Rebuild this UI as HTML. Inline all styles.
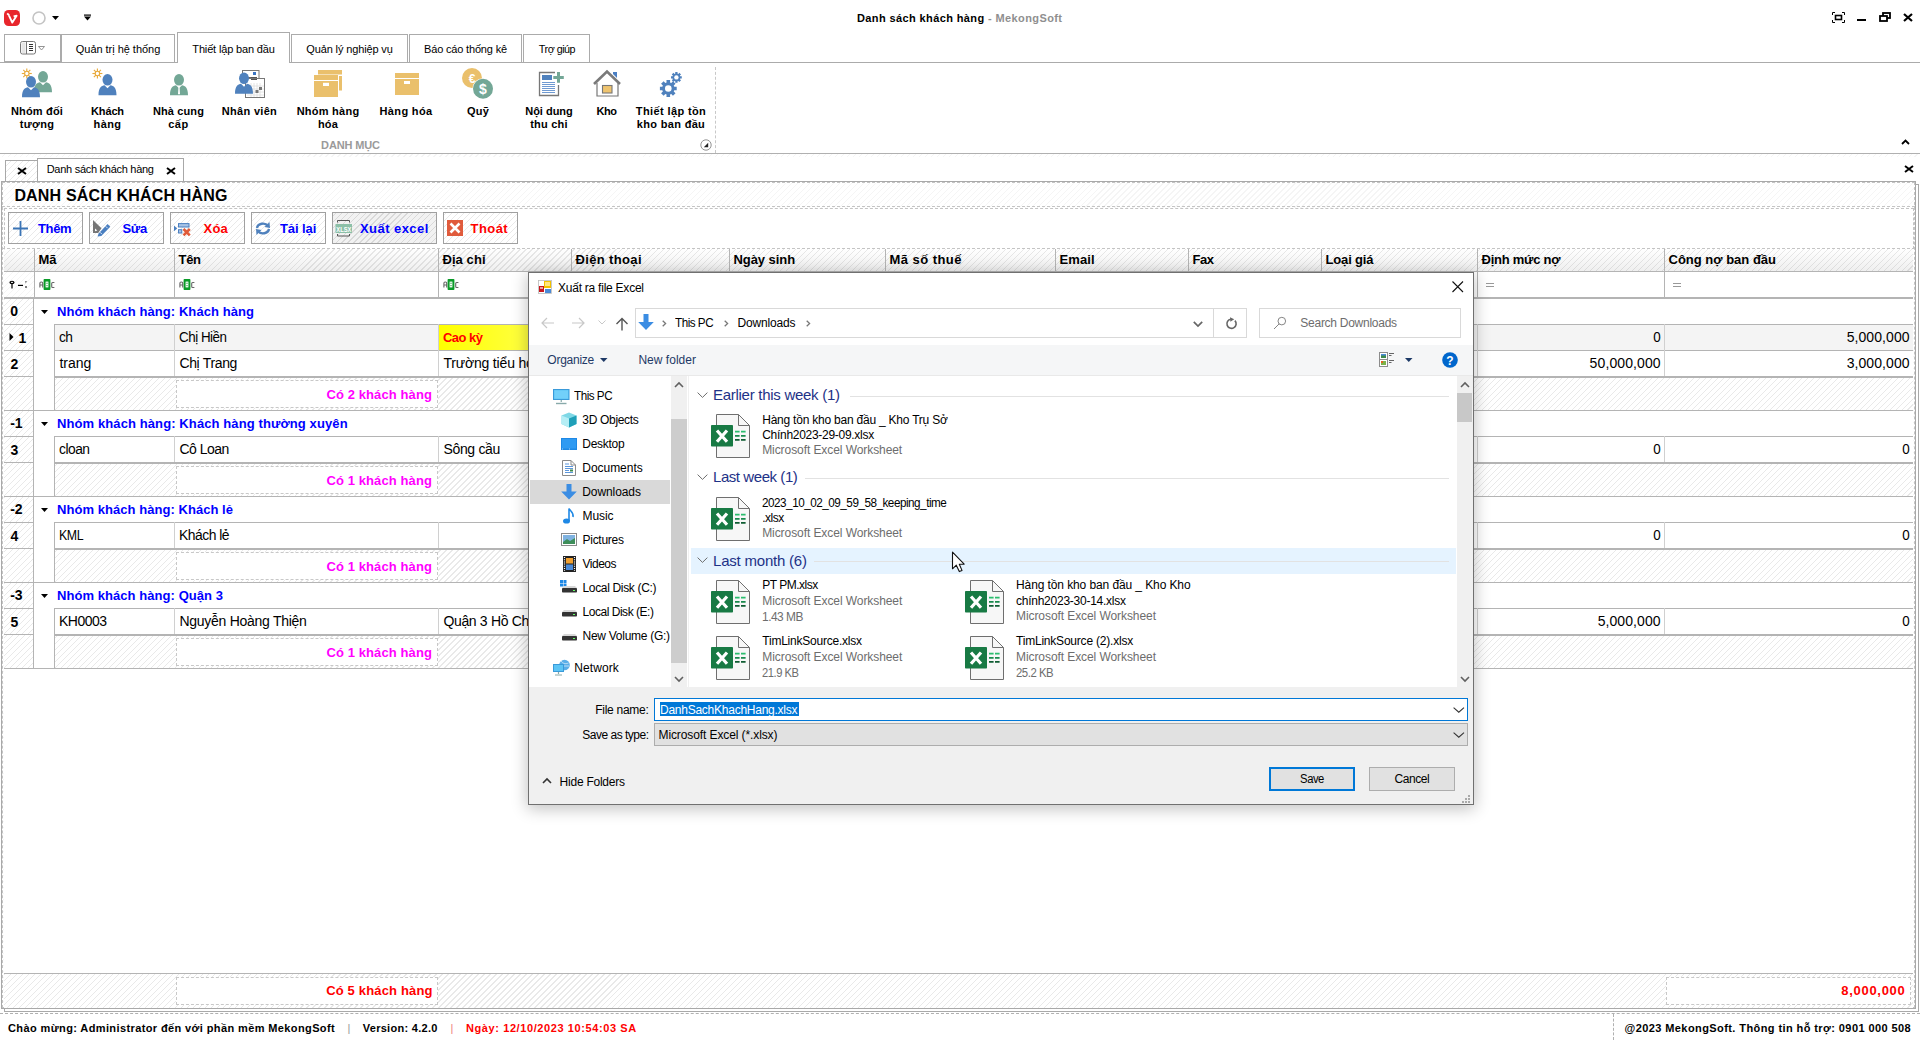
<!DOCTYPE html>
<html><head><meta charset="utf-8"><title>Danh sách khách hàng - MekongSoft</title>
<style>
html,body{margin:0;padding:0;width:1920px;height:1040px;overflow:hidden;background:#fff;}
body{position:relative;font-family:"Liberation Sans", sans-serif;}
.t{position:absolute;white-space:nowrap;}
.b{position:absolute;box-sizing:border-box;}
svg.b{overflow:visible;}
</style></head><body>
<svg class="b" style="left:4px;top:10px;" width="16" height="16" viewBox="0 0 16 16"><rect x="0" y="0" width="16" height="16" rx="4.5" fill="#e8262c"/><path d="M3.2 3.4 L5.2 5.4 M5 5.6 L8.3 12.6 L12.6 5.8 L9.6 6.4" stroke="#fff" stroke-width="1.9" fill="none" stroke-linejoin="round"/></svg><svg class="b" style="left:32px;top:11px;" width="14" height="14" viewBox="0 0 14 14"><circle cx="7" cy="7" r="6" stroke="#c4c4c4" stroke-width="1.6" fill="none"/></svg><svg class="b" style="left:52px;top:16px;" width="8" height="5" viewBox="0 0 8 5"><path d="M0 0 L7 0 L3.5 4 Z" fill="#000"/></svg><svg class="b" style="left:84px;top:14px;" width="8" height="8" viewBox="0 0 8 8"><rect x="0" y="0.5" width="7" height="1.2" fill="#000"/><path d="M0 2.5 L7 2.5 L3.5 6.5 Z" fill="#000"/></svg><div class="t" style="left:857px;top:13.19px;font-size:11px;line-height:11px;font-weight:700;color:#000;letter-spacing:0.389px;">Danh sách khách hàng <span style="color:#8f8f8f">- MekongSoft</span></div><svg class="b" style="left:1832px;top:12px;" width="13" height="11" viewBox="0 0 13 11"><path d="M0.5 3 V0.5 H3 M10 0.5 H12.5 V3 M12.5 8 V10.5 H10 M3 10.5 H0.5 V8" stroke="#000" stroke-width="1" fill="none"/><rect x="3.5" y="3.5" width="6" height="4" stroke="#000" stroke-width="1.6" fill="none"/></svg><div class="b" style="left:1857px;top:19px;width:9px;height:2px;background:#000"></div><svg class="b" style="left:1879px;top:12px;" width="12" height="10" viewBox="0 0 12 10"><rect x="4" y="1" width="7" height="5" stroke="#000" stroke-width="1.8" fill="none"/><rect x="1" y="4" width="7" height="5" stroke="#000" stroke-width="1.8" fill="#fff"/></svg><svg class="b" style="left:1903px;top:13px;" width="10" height="9" viewBox="0 0 10 9"><path d="M1 1 L9 8 M9 1 L1 8" stroke="#000" stroke-width="2.2"/></svg><div class="b" style="left:0px;top:62px;width:1920px;height:1px;background:#ababab"></div><div class="b" style="left:4px;top:34px;width:57px;height:28px;border:1px solid #ababab;background:#fff"></div><svg class="b" style="left:20px;top:41px;" width="26" height="14" viewBox="0 0 26 14"><rect x="0.5" y="0.5" width="15" height="12.5" rx="2" stroke="#777" fill="#fff"/><rect x="1.5" y="1.5" width="4" height="10.5" fill="#e6e6e6"/><path d="M6.5 0.5 V13" stroke="#777"/><path d="M9 3.5 H13 M9 5.5 H13 M9 7.5 H13 M9 9.5 H13" stroke="#333"/><path d="M18.5 5.5 L24.5 5.5 L21.5 9 Z" stroke="#888" fill="#fff" stroke-width="0.9"/></svg><div class="b" style="left:61px;top:34px;width:114px;height:28px;border:1px solid #ababab;border-bottom:none;background:#fff"></div><div class="t" style="left:-182.0px;width:600px;text-align:center;top:43.69px;font-size:11px;line-height:11px;font-weight:400;color:#000;letter-spacing:-0.032px;">Quản trị hệ thống</div><div class="b" style="left:291px;top:34px;width:117px;height:28px;border:1px solid #ababab;border-bottom:none;background:#fff"></div><div class="t" style="left:49.5px;width:600px;text-align:center;top:43.69px;font-size:11px;line-height:11px;font-weight:400;color:#000;letter-spacing:-0.136px;">Quản lý nghiệp vụ</div><div class="b" style="left:409px;top:34px;width:113px;height:28px;border:1px solid #ababab;border-bottom:none;background:#fff"></div><div class="t" style="left:165.5px;width:600px;text-align:center;top:43.69px;font-size:11px;line-height:11px;font-weight:400;color:#000;letter-spacing:-0.175px;">Báo cáo thống kê</div><div class="b" style="left:523px;top:34px;width:67px;height:28px;border:1px solid #ababab;border-bottom:none;background:#fff"></div><div class="t" style="left:256.5px;width:600px;text-align:center;top:43.69px;font-size:11px;line-height:11px;font-weight:400;color:#000;letter-spacing:-0.500px;transform:scaleX(0.9788);transform-origin:center center;">Trợ giúp</div><div class="b" style="left:177px;top:32px;width:113px;height:31px;border:1px solid #ababab;border-bottom:none;background:#fff"></div><div class="t" style="left:-66.5px;width:600px;text-align:center;top:43.69px;font-size:11px;line-height:11px;font-weight:400;color:#000;letter-spacing:-0.157px;">Thiết lập ban đầu</div><svg class="b" style="left:20px;top:64px;" width="34" height="36" viewBox="0 0 34 36"><g stroke="#e8a93a" stroke-width="1.1"><line x1="9.00" y1="9.50" x2="11.80" y2="9.50"/><line x1="8.36" y1="11.06" x2="10.34" y2="13.04"/><line x1="6.80" y1="11.70" x2="6.80" y2="14.50"/><line x1="5.24" y1="11.06" x2="3.26" y2="13.04"/><line x1="4.60" y1="9.50" x2="1.80" y2="9.50"/><line x1="5.24" y1="7.94" x2="3.26" y2="5.96"/><line x1="6.80" y1="7.30" x2="6.80" y2="4.50"/><line x1="8.36" y1="7.94" x2="10.34" y2="5.96"/></g><circle cx="6.8" cy="9.5" r="2.2" fill="none" stroke="#e8a93a" stroke-width="1.1"/><g transform="translate(23,7.3) scale(1.0)"><ellipse cx="0" cy="5.5" rx="5" ry="5.8" fill="#73a796"/><path d="M-9 21 C-9 13 -6 11.5 -3 11 L0 14 L3 11 C6 11.5 9 13 9 21 Z" fill="#73a796"/></g><g transform="translate(11,12.3) scale(1.0)"><ellipse cx="0" cy="5.5" rx="5" ry="5.8" fill="#4f81bd"/><path d="M-9 21 C-9 13 -6 11.5 -3 11 L0 14 L3 11 C6 11.5 9 13 9 21 Z" fill="#4f81bd"/></g></svg><svg class="b" style="left:90px;top:64px;" width="30" height="36" viewBox="0 0 30 36"><g stroke="#e8a93a" stroke-width="1.1"><line x1="9.60" y1="9.50" x2="12.40" y2="9.50"/><line x1="8.96" y1="11.06" x2="10.94" y2="13.04"/><line x1="7.40" y1="11.70" x2="7.40" y2="14.50"/><line x1="5.84" y1="11.06" x2="3.86" y2="13.04"/><line x1="5.20" y1="9.50" x2="2.40" y2="9.50"/><line x1="5.84" y1="7.94" x2="3.86" y2="5.96"/><line x1="7.40" y1="7.30" x2="7.40" y2="4.50"/><line x1="8.96" y1="7.94" x2="10.94" y2="5.96"/></g><circle cx="7.4" cy="9.5" r="2.2" fill="none" stroke="#e8a93a" stroke-width="1.1"/><g transform="translate(17.5,10.3) scale(1.0)"><ellipse cx="0" cy="5.5" rx="5" ry="5.8" fill="#4f81bd"/><path d="M-9 21 C-9 13 -6 11.5 -3 11 L0 14 L3 11 C6 11.5 9 13 9 21 Z" fill="#4f81bd"/></g></svg><svg class="b" style="left:168px;top:64px;" width="24" height="36" viewBox="0 0 24 36"><g transform="translate(11,10.3) scale(1.0)"><ellipse cx="0" cy="5.5" rx="5" ry="5.8" fill="#73a796"/><path d="M-9 21 C-9 13 -6 11.5 -3 11 L0 14 L3 11 C6 11.5 9 13 9 21 Z" fill="#73a796"/><path d="M-0.6 13 H0.6 L1 20 H-1 Z" fill="#fff"/></g></svg><svg class="b" style="left:234px;top:68px;" width="32" height="32" viewBox="0 0 32 32"><rect x="8.5" y="2.5" width="16.5" height="12" fill="#fff" stroke="#777" stroke-width="1"/><rect x="19" y="4" width="3" height="3" fill="#3a75c4"/><path d="M14 9.5 H21 M14 11.5 H21" stroke="#666"/><rect x="11.5" y="10.5" width="19" height="19" fill="#fff" stroke="#777"/><path d="M17 15 V29 M20 15 V29 M23 15 V29 M26 15 V29 M13 18 H30 M13 21 H30 M13 24 H30 M13 27 H30" stroke="#ddd" stroke-width="0.8"/><rect x="25" y="19" width="3" height="3" fill="#777"/><rect x="21.5" y="22" width="3" height="3" fill="#777"/><path d="M17 9.5 H23 M17 11.5 H23" stroke="#555"/><g transform="translate(10,4.8) scale(1.0)"><ellipse cx="0" cy="5.5" rx="5" ry="5.8" fill="#4f81bd"/><path d="M-9 21 C-9 13 -6 11.5 -3 11 L0 14 L3 11 C6 11.5 9 13 9 21 Z" fill="#4f81bd"/></g></svg><svg class="b" style="left:314px;top:70px;" width="29" height="28" viewBox="0 0 29 28"><rect x="4" y="0" width="24" height="4.5" fill="#eac06c"/><rect x="25" y="6" width="3" height="14.5" fill="#eac06c"/><rect x="0" y="5" width="24" height="5" fill="#eac06c"/><rect x="0" y="11" width="24" height="16" fill="#eac06c"/><rect x="9" y="12.8" width="6" height="3.2" fill="#fff"/></svg><svg class="b" style="left:395px;top:72px;" width="24" height="24" viewBox="0 0 24 24"><rect x="0" y="1" width="24" height="5" fill="#eac06c"/><rect x="0" y="7" width="24" height="16" fill="#eac06c"/><rect x="9" y="9" width="6" height="3" fill="#fff"/></svg><svg class="b" style="left:460px;top:66px;" width="36" height="34" viewBox="0 0 36 34"><circle cx="12" cy="12" r="10" fill="#eac06c"/><text x="12" y="16.5" font-size="12" font-weight="700" fill="#fff" text-anchor="middle" font-family="Liberation Sans">€</text><circle cx="23" cy="22.7" r="10.5" fill="#fff"/><circle cx="23" cy="22.7" r="10" fill="#73a796"/><text x="23" y="28" font-size="14" font-weight="700" fill="#fff" text-anchor="middle" font-family="Liberation Sans">$</text></svg><svg class="b" style="left:538px;top:70px;" width="28" height="28" viewBox="0 0 28 28"><path d="M17 2.5 H1.5 V25.5 H20.5 V15" stroke="#777" stroke-width="1.3" fill="#fff"/><rect x="4" y="5" width="10" height="5" fill="#4f81bd"/><path d="M4 12.5 H17 M4 14.5 H17 M4 16.5 H17 M4 18.5 H17 M4 20.5 H17 M4 22.5 H17" stroke="#6f9ad2" stroke-width="1"/><path d="M20.5 2 V12.8 M15.3 7.4 H25.8" stroke="#73a796" stroke-width="3"/></svg><svg class="b" style="left:592px;top:68px;" width="30" height="30" viewBox="0 0 30 30"><path d="M21 4 H25 V10 L21 6 Z" fill="#4a7ec2"/><path d="M5 15 V28 H26 V15" stroke="#777" stroke-width="1.2" fill="#fff"/><path d="M2 16 L15 3.5 L28 16" stroke="#7a7a7a" stroke-width="2.6" fill="none"/><rect x="10.5" y="17.5" width="9.5" height="7.5" fill="#efc46f" stroke="#777" stroke-width="1.1"/></svg><svg class="b" style="left:656px;top:68px;" width="32" height="32" viewBox="0 0 32 32"><polygon points="18.26,18.78 20.70,18.66 20.70,22.34 18.26,22.22 17.73,23.50 19.54,25.14 16.94,27.74 15.30,25.93 14.02,26.46 14.14,28.90 10.46,28.90 10.58,26.46 9.30,25.93 7.66,27.74 5.06,25.14 6.87,23.50 6.34,22.22 3.90,22.34 3.90,18.66 6.34,18.78 6.87,17.50 5.06,15.86 7.66,13.26 9.30,15.07 10.58,14.54 10.46,12.10 14.14,12.10 14.02,14.54 15.30,15.07 16.94,13.26 19.54,15.86 17.73,17.50" fill="#4f81bd"/><circle cx="12.3" cy="20.5" r="3.3" fill="#fff"/><polygon points="24.24,8.29 25.77,8.22 25.77,10.58 24.24,10.51 23.90,11.33 25.03,12.37 23.37,14.03 22.33,12.90 21.51,13.24 21.58,14.77 19.22,14.77 19.29,13.24 18.47,12.90 17.43,14.03 15.77,12.37 16.90,11.33 16.56,10.51 15.03,10.58 15.03,8.22 16.56,8.29 16.90,7.47 15.77,6.43 17.43,4.77 18.47,5.90 19.29,5.56 19.22,4.03 21.58,4.03 21.51,5.56 22.33,5.90 23.37,4.77 25.03,6.43 23.90,7.47" fill="#4f81bd"/><circle cx="20.4" cy="9.4" r="2.2" fill="#fff"/></svg><div class="t" style="left:-263px;width:600px;text-align:center;top:105.69px;font-size:11px;line-height:11px;font-weight:700;color:#000;letter-spacing:0.183px;">Nhóm đối</div><div class="t" style="left:-263px;width:600px;text-align:center;top:118.69px;font-size:11px;line-height:11px;font-weight:700;color:#000;letter-spacing:0.277px;">tượng</div><div class="t" style="left:-192.5px;width:600px;text-align:center;top:105.69px;font-size:11px;line-height:11px;font-weight:700;color:#000;letter-spacing:-0.156px;">Khách</div><div class="t" style="left:-192.5px;width:600px;text-align:center;top:118.69px;font-size:11px;line-height:11px;font-weight:700;color:#000;letter-spacing:0.406px;">hàng</div><div class="t" style="left:-121.5px;width:600px;text-align:center;top:105.69px;font-size:11px;line-height:11px;font-weight:700;color:#000;letter-spacing:0.125px;">Nhà cung</div><div class="t" style="left:-121.5px;width:600px;text-align:center;top:118.69px;font-size:11px;line-height:11px;font-weight:700;color:#000;letter-spacing:0.516px;">cấp</div><div class="t" style="left:-50.5px;width:600px;text-align:center;top:105.69px;font-size:11px;line-height:11px;font-weight:700;color:#000;letter-spacing:0.303px;">Nhân viên</div><div class="t" style="left:28px;width:600px;text-align:center;top:105.69px;font-size:11px;line-height:11px;font-weight:700;color:#000;letter-spacing:0.250px;">Nhóm hàng</div><div class="t" style="left:28px;width:600px;text-align:center;top:118.69px;font-size:11px;line-height:11px;font-weight:700;color:#000;letter-spacing:0.219px;">hóa</div><div class="t" style="left:106px;width:600px;text-align:center;top:105.69px;font-size:11px;line-height:11px;font-weight:700;color:#000;letter-spacing:0.339px;">Hàng hóa</div><div class="t" style="left:178px;width:600px;text-align:center;top:105.69px;font-size:11px;line-height:11px;font-weight:700;color:#000;letter-spacing:0.172px;">Quỹ</div><div class="t" style="left:249px;width:600px;text-align:center;top:105.69px;font-size:11px;line-height:11px;font-weight:700;color:#000;letter-spacing:-0.022px;">Nội dung</div><div class="t" style="left:249px;width:600px;text-align:center;top:118.69px;font-size:11px;line-height:11px;font-weight:700;color:#000;letter-spacing:0.240px;">thu chi</div><div class="t" style="left:306.5px;width:600px;text-align:center;top:105.69px;font-size:11px;line-height:11px;font-weight:700;color:#000;letter-spacing:-0.445px;">Kho</div><div class="t" style="left:371px;width:600px;text-align:center;top:105.69px;font-size:11px;line-height:11px;font-weight:700;color:#000;letter-spacing:0.384px;">Thiết lập tồn</div><div class="t" style="left:371px;width:600px;text-align:center;top:118.69px;font-size:11px;line-height:11px;font-weight:700;color:#000;letter-spacing:0.322px;">kho ban đầu</div><div class="t" style="left:50.5px;width:600px;text-align:center;top:139.89px;font-size:11px;line-height:11px;font-weight:700;color:#9a9a9a;letter-spacing:-0.127px;">DANH MỤC</div><div class="b" style="left:715px;top:67px;width:1px;height:86px;border-left:1px dashed #c8c8c8"></div><svg class="b" style="left:700px;top:139px;" width="12" height="12" viewBox="0 0 12 12"><circle cx="6" cy="6" r="5.2" fill="#fff" stroke="#888" stroke-width="0.9"/><path d="M3.8 8.2 H8.2 V3.8 Z" fill="#222"/></svg><svg class="b" style="left:1901px;top:139px;" width="9" height="6" viewBox="0 0 9 6"><path d="M1 5 L4.5 1.5 L8 5" stroke="#000" stroke-width="1.8" fill="none"/></svg><div class="b" style="left:0px;top:153px;width:1920px;height:1px;background:#b0b0b0"></div><div class="b" style="left:0px;top:154px;width:1920px;height:3px;background:repeating-linear-gradient(-45deg, #ffffff 0px, #ffffff 3.4px, #f5f5f5 3.4px, #f5f5f5 4.24px)"></div><div class="b" style="left:5px;top:160px;width:33px;height:22px;border:1px solid #a8a8a8;border-bottom:none;background:repeating-linear-gradient(-45deg, #ffffff 0px, #ffffff 3.4px, #e9e9e9 3.4px, #e9e9e9 4.24px)"></div><svg class="b" style="left:17px;top:167px;" width="10" height="8" viewBox="0 0 10 8"><path d="M1 1 L9 7 M9 1 L1 7" stroke="#000" stroke-width="2"/></svg><div class="b" style="left:37px;top:158px;width:147px;height:24px;border:1px solid #a8a8a8;border-bottom:none;background:#fff"></div><div class="t" style="left:46.7px;top:163.99px;font-size:11px;line-height:11px;font-weight:400;color:#000;letter-spacing:-0.275px;">Danh sách khách hàng</div><svg class="b" style="left:166px;top:167px;" width="10" height="8" viewBox="0 0 10 8"><path d="M1 1 L9 7 M9 1 L1 7" stroke="#000" stroke-width="2"/></svg><svg class="b" style="left:1904px;top:165px;" width="10" height="8" viewBox="0 0 10 8"><path d="M1 1 L9 7 M9 1 L1 7" stroke="#000" stroke-width="2"/></svg><div class="b" style="left:4px;top:184px;width:1915px;height:828px;border:1px solid #a9a9a9"></div><div class="b" style="left:1px;top:181px;width:1915px;height:828px;border:1px solid #a9a9a9;background:repeating-linear-gradient(-45deg, #ffffff 0px, #ffffff 3.4px, #f5f5f5 3.4px, #f5f5f5 4.24px)"></div><div class="b" style="left:2px;top:182px;width:1913px;height:826px;border:1px dashed #c4c4c4"></div><div class="t" style="left:14.4px;top:187.76px;font-size:16px;line-height:16px;font-weight:700;color:#000;letter-spacing:0.169px;">DANH SÁCH KHÁCH HÀNG</div><div class="b" style="left:2px;top:206px;width:1913px;height:1px;border-top:1px dashed #c4c4c4"></div><div class="b" style="left:4px;top:208px;width:1910px;height:41px;background:#fff;border-top:1px dashed #c4c4c4;border-left:1px dashed #c4c4c4;border-right:1px dashed #c4c4c4"></div><div class="b" style="left:8px;top:212px;width:75px;height:32px;border:1px solid #a0a0a0;background:repeating-linear-gradient(-45deg, #ffffff 0px, #ffffff 3.4px, #e9e9e9 3.4px, #e9e9e9 4.24px)"></div><div class="b" style="left:89px;top:212px;width:75px;height:32px;border:1px solid #a0a0a0;background:repeating-linear-gradient(-45deg, #ffffff 0px, #ffffff 3.4px, #e9e9e9 3.4px, #e9e9e9 4.24px)"></div><div class="b" style="left:170px;top:212px;width:75px;height:32px;border:1px solid #a0a0a0;background:repeating-linear-gradient(-45deg, #ffffff 0px, #ffffff 3.4px, #e9e9e9 3.4px, #e9e9e9 4.24px)"></div><div class="b" style="left:251px;top:212px;width:75px;height:32px;border:1px solid #a0a0a0;background:repeating-linear-gradient(-45deg, #ffffff 0px, #ffffff 3.4px, #e9e9e9 3.4px, #e9e9e9 4.24px)"></div><div class="b" style="left:332px;top:212px;width:105px;height:32px;border:1px solid #a0a0a0;background:repeating-linear-gradient(-45deg, #f2f2f2 0px, #f2f2f2 3.2px, #d9d9d9 3.2px, #d9d9d9 4.2px)"></div><div class="b" style="left:443px;top:212px;width:75px;height:32px;border:1px solid #a0a0a0;background:repeating-linear-gradient(-45deg, #ffffff 0px, #ffffff 3.4px, #e9e9e9 3.4px, #e9e9e9 4.24px)"></div><div class="t" style="left:38px;top:221.70px;font-size:13px;line-height:13px;font-weight:700;color:#0000ff;letter-spacing:-0.357px;">Thêm</div><div class="t" style="left:122.5px;top:221.70px;font-size:13px;line-height:13px;font-weight:700;color:#0000ff;letter-spacing:-0.314px;">Sửa</div><div class="t" style="left:203.5px;top:221.70px;font-size:13px;line-height:13px;font-weight:700;color:#ff0000;letter-spacing:0.228px;">Xóa</div><div class="t" style="left:280px;top:221.70px;font-size:13px;line-height:13px;font-weight:700;color:#0000ff;letter-spacing:-0.093px;">Tải lại</div><div class="t" style="left:360px;top:221.70px;font-size:13px;line-height:13px;font-weight:700;color:#0000ff;letter-spacing:0.441px;">Xuất excel</div><div class="t" style="left:470.5px;top:221.70px;font-size:13px;line-height:13px;font-weight:700;color:#ff0000;letter-spacing:0.452px;">Thoát</div><svg class="b" style="left:13px;top:221px;" width="15" height="15" viewBox="0 0 15 15"><path d="M7.5 0 V15 M0 7.5 H15" stroke="#3b74b5" stroke-width="1.8"/></svg><svg class="b" style="left:90px;top:218px;" width="22" height="20" viewBox="0 0 22 20"><path d="M3 2 L11.5 10.3 L8.2 15 H3 Z" fill="#767676"/><path d="M5 10.5 L7.3 12.6 L5 13.3 Z" fill="#fff"/><path d="M8.6 15.4 L17.6 6.1 L20.3 8.8 L11.3 18 L7.5 18.4 Z" fill="#4a7fc0"/><path d="M10.1 14.3 L11.9 16.1 M15.8 8.4 L17.6 10.2" stroke="#fff" stroke-width="0.8"/></svg><svg class="b" style="left:172px;top:221px;" width="20" height="17" viewBox="0 0 20 17"><path d="M2 4.6 L5.2 7.4 L2 10.2 Z" fill="#4a7fc0"/><rect x="6.5" y="2.6" width="10.5" height="3.4" fill="#a8c4e6" stroke="#4a7fc0" stroke-width="1"/><rect x="6.5" y="8.7" width="3.3" height="3.3" fill="#a8c4e6" stroke="#4a7fc0" stroke-width="1"/><path d="M11.5 8 L17.8 14.3 M17.8 8 L11.5 14.3" stroke="#e05a38" stroke-width="2.6"/></svg><svg class="b" style="left:255px;top:222px;" width="16" height="13" viewBox="0 0 16 13"><path d="M2 6 A6 5 0 0 1 13 4" stroke="#4f81bd" stroke-width="2.4" fill="none"/><path d="M14.5 0 L15 6 L9.5 5 Z" fill="#4f81bd"/><path d="M14 7 A6 5 0 0 1 3 9" stroke="#4f81bd" stroke-width="2.4" fill="none"/><path d="M1.5 13 L1 7 L6.5 8 Z" fill="#4f81bd"/></svg><svg class="b" style="left:335px;top:220px;" width="18" height="17" viewBox="0 0 18 17"><path d="M2.5 2.5 V0.5 H14.5 V2.5 M2.5 14 V16 H14.5 V14" stroke="#555" fill="none"/><rect x="0.5" y="4" width="16.5" height="9" fill="#8cc0a8"/><text x="8.8" y="11.5" font-size="7" fill="#fff" text-anchor="middle" font-family="Liberation Sans" font-weight="700" textLength="15" lengthAdjust="spacingAndGlyphs">XLSX</text></svg><svg class="b" style="left:447px;top:220px;" width="16" height="16" viewBox="0 0 16 16"><rect x="0" y="0" width="16" height="16" fill="#e05b3c"/><path d="M3.5 3.5 L12.5 12.5 M12.5 3.5 L3.5 12.5" stroke="#fff" stroke-width="2.6"/></svg><div class="b" style="left:4px;top:249px;width:1909px;height:22px;background:repeating-linear-gradient(-45deg, rgba(0,0,0,0) 0px, rgba(0,0,0,0) 3.4px, rgba(0,0,0,0.085) 3.4px, rgba(0,0,0,0.085) 4.24px), linear-gradient(#ffffff, #efefef)"></div><div class="b" style="left:2px;top:248px;width:1913px;height:1px;border-top:1px dashed #c4c4c4"></div><div class="b" style="left:34px;top:249px;width:1px;height:23px;background:#b4b4b4"></div><div class="t" style="left:38.5px;top:252.80px;font-size:13px;line-height:13px;font-weight:700;color:#000;letter-spacing:-0.062px;">Mã</div><div class="b" style="left:174px;top:249px;width:1px;height:23px;background:#b4b4b4"></div><div class="t" style="left:178.5px;top:252.80px;font-size:13px;line-height:13px;font-weight:700;color:#000;letter-spacing:-0.312px;">Tên</div><div class="b" style="left:438px;top:249px;width:1px;height:23px;background:#b4b4b4"></div><div class="t" style="left:442.5px;top:252.80px;font-size:13px;line-height:13px;font-weight:700;color:#000;letter-spacing:0.062px;">Địa chỉ</div><div class="b" style="left:571px;top:249px;width:1px;height:23px;background:#b4b4b4"></div><div class="t" style="left:575.5px;top:252.80px;font-size:13px;line-height:13px;font-weight:700;color:#000;letter-spacing:0.351px;">Điện thoại</div><div class="b" style="left:729px;top:249px;width:1px;height:23px;background:#b4b4b4"></div><div class="t" style="left:733.5px;top:252.80px;font-size:13px;line-height:13px;font-weight:700;color:#000;letter-spacing:-0.066px;">Ngày sinh</div><div class="b" style="left:885px;top:249px;width:1px;height:23px;background:#b4b4b4"></div><div class="t" style="left:889.5px;top:252.80px;font-size:13px;line-height:13px;font-weight:700;color:#000;letter-spacing:0.455px;">Mã số thuế</div><div class="b" style="left:1055px;top:249px;width:1px;height:23px;background:#b4b4b4"></div><div class="t" style="left:1059.5px;top:252.80px;font-size:13px;line-height:13px;font-weight:700;color:#000;letter-spacing:0.078px;">Email</div><div class="b" style="left:1188px;top:249px;width:1px;height:23px;background:#b4b4b4"></div><div class="t" style="left:1192.5px;top:252.80px;font-size:13px;line-height:13px;font-weight:700;color:#000;letter-spacing:-0.403px;">Fax</div><div class="b" style="left:1321px;top:249px;width:1px;height:23px;background:#b4b4b4"></div><div class="t" style="left:1325.5px;top:252.80px;font-size:13px;line-height:13px;font-weight:700;color:#000;letter-spacing:-0.161px;">Loại giá</div><div class="b" style="left:1477px;top:249px;width:1px;height:23px;background:#b4b4b4"></div><div class="t" style="left:1481.5px;top:252.80px;font-size:13px;line-height:13px;font-weight:700;color:#000;letter-spacing:-0.250px;">Định mức nợ</div><div class="b" style="left:1664px;top:249px;width:1px;height:23px;background:#b4b4b4"></div><div class="t" style="left:1668.5px;top:252.80px;font-size:13px;line-height:13px;font-weight:700;color:#000;letter-spacing:0.003px;">Công nợ ban đầu</div><div class="b" style="left:4px;top:271px;width:1909px;height:1px;background:#b4b4b4"></div><div class="b" style="left:34px;top:272px;width:1879px;height:25px;background:#fff"></div><div class="b" style="left:4px;top:297px;width:1909px;height:2px;background:#b4b4b4"></div><div class="b" style="left:34px;top:272px;width:1px;height:25px;background:#b4b4b4"></div><div class="b" style="left:174px;top:272px;width:1px;height:25px;background:#b4b4b4"></div><div class="b" style="left:438px;top:272px;width:1px;height:25px;background:#b4b4b4"></div><div class="b" style="left:571px;top:272px;width:1px;height:25px;background:#b4b4b4"></div><div class="b" style="left:729px;top:272px;width:1px;height:25px;background:#b4b4b4"></div><div class="b" style="left:885px;top:272px;width:1px;height:25px;background:#b4b4b4"></div><div class="b" style="left:1055px;top:272px;width:1px;height:25px;background:#b4b4b4"></div><div class="b" style="left:1188px;top:272px;width:1px;height:25px;background:#b4b4b4"></div><div class="b" style="left:1321px;top:272px;width:1px;height:25px;background:#b4b4b4"></div><div class="b" style="left:1477px;top:272px;width:1px;height:25px;background:#b4b4b4"></div><div class="b" style="left:1664px;top:272px;width:1px;height:25px;background:#b4b4b4"></div><svg class="b" style="left:38.5px;top:279px;" width="16" height="11" viewBox="0 0 16 11"><path d="M0.9 8.5 V4.3 Q0.9 3 2.1 3 H2.5 Q3.7 3 3.7 4.3 V8.5 M0.9 6 H3.7" stroke="#666" stroke-width="1.1" fill="none"/><rect x="4.6" y="0" width="6.8" height="11" rx="0.8" fill="#0a9b28"/><rect x="6.6" y="2.6" width="2.8" height="5.8" fill="#fff"/><rect x="7.5" y="3.7" width="1" height="1.2" fill="#0a9b28"/><rect x="7.5" y="6" width="1" height="1.2" fill="#0a9b28"/><path d="M15.4 3.5 H13.6 Q12.7 3.5 12.7 4.5 V7.5 Q12.7 8.5 13.6 8.5 H15.4" stroke="#666" stroke-width="1.1" fill="none"/></svg><svg class="b" style="left:178.5px;top:279px;" width="16" height="11" viewBox="0 0 16 11"><path d="M0.9 8.5 V4.3 Q0.9 3 2.1 3 H2.5 Q3.7 3 3.7 4.3 V8.5 M0.9 6 H3.7" stroke="#666" stroke-width="1.1" fill="none"/><rect x="4.6" y="0" width="6.8" height="11" rx="0.8" fill="#0a9b28"/><rect x="6.6" y="2.6" width="2.8" height="5.8" fill="#fff"/><rect x="7.5" y="3.7" width="1" height="1.2" fill="#0a9b28"/><rect x="7.5" y="6" width="1" height="1.2" fill="#0a9b28"/><path d="M15.4 3.5 H13.6 Q12.7 3.5 12.7 4.5 V7.5 Q12.7 8.5 13.6 8.5 H15.4" stroke="#666" stroke-width="1.1" fill="none"/></svg><svg class="b" style="left:442.5px;top:279px;" width="16" height="11" viewBox="0 0 16 11"><path d="M0.9 8.5 V4.3 Q0.9 3 2.1 3 H2.5 Q3.7 3 3.7 4.3 V8.5 M0.9 6 H3.7" stroke="#666" stroke-width="1.1" fill="none"/><rect x="4.6" y="0" width="6.8" height="11" rx="0.8" fill="#0a9b28"/><rect x="6.6" y="2.6" width="2.8" height="5.8" fill="#fff"/><rect x="7.5" y="3.7" width="1" height="1.2" fill="#0a9b28"/><rect x="7.5" y="6" width="1" height="1.2" fill="#0a9b28"/><path d="M15.4 3.5 H13.6 Q12.7 3.5 12.7 4.5 V7.5 Q12.7 8.5 13.6 8.5 H15.4" stroke="#666" stroke-width="1.1" fill="none"/></svg><svg class="b" style="left:575.5px;top:279px;" width="16" height="11" viewBox="0 0 16 11"><path d="M0.9 8.5 V4.3 Q0.9 3 2.1 3 H2.5 Q3.7 3 3.7 4.3 V8.5 M0.9 6 H3.7" stroke="#666" stroke-width="1.1" fill="none"/><rect x="4.6" y="0" width="6.8" height="11" rx="0.8" fill="#0a9b28"/><rect x="6.6" y="2.6" width="2.8" height="5.8" fill="#fff"/><rect x="7.5" y="3.7" width="1" height="1.2" fill="#0a9b28"/><rect x="7.5" y="6" width="1" height="1.2" fill="#0a9b28"/><path d="M15.4 3.5 H13.6 Q12.7 3.5 12.7 4.5 V7.5 Q12.7 8.5 13.6 8.5 H15.4" stroke="#666" stroke-width="1.1" fill="none"/></svg><svg class="b" style="left:733.5px;top:279px;" width="16" height="11" viewBox="0 0 16 11"><path d="M0.9 8.5 V4.3 Q0.9 3 2.1 3 H2.5 Q3.7 3 3.7 4.3 V8.5 M0.9 6 H3.7" stroke="#666" stroke-width="1.1" fill="none"/><rect x="4.6" y="0" width="6.8" height="11" rx="0.8" fill="#0a9b28"/><rect x="6.6" y="2.6" width="2.8" height="5.8" fill="#fff"/><rect x="7.5" y="3.7" width="1" height="1.2" fill="#0a9b28"/><rect x="7.5" y="6" width="1" height="1.2" fill="#0a9b28"/><path d="M15.4 3.5 H13.6 Q12.7 3.5 12.7 4.5 V7.5 Q12.7 8.5 13.6 8.5 H15.4" stroke="#666" stroke-width="1.1" fill="none"/></svg><svg class="b" style="left:889.5px;top:279px;" width="16" height="11" viewBox="0 0 16 11"><path d="M0.9 8.5 V4.3 Q0.9 3 2.1 3 H2.5 Q3.7 3 3.7 4.3 V8.5 M0.9 6 H3.7" stroke="#666" stroke-width="1.1" fill="none"/><rect x="4.6" y="0" width="6.8" height="11" rx="0.8" fill="#0a9b28"/><rect x="6.6" y="2.6" width="2.8" height="5.8" fill="#fff"/><rect x="7.5" y="3.7" width="1" height="1.2" fill="#0a9b28"/><rect x="7.5" y="6" width="1" height="1.2" fill="#0a9b28"/><path d="M15.4 3.5 H13.6 Q12.7 3.5 12.7 4.5 V7.5 Q12.7 8.5 13.6 8.5 H15.4" stroke="#666" stroke-width="1.1" fill="none"/></svg><svg class="b" style="left:1059.5px;top:279px;" width="16" height="11" viewBox="0 0 16 11"><path d="M0.9 8.5 V4.3 Q0.9 3 2.1 3 H2.5 Q3.7 3 3.7 4.3 V8.5 M0.9 6 H3.7" stroke="#666" stroke-width="1.1" fill="none"/><rect x="4.6" y="0" width="6.8" height="11" rx="0.8" fill="#0a9b28"/><rect x="6.6" y="2.6" width="2.8" height="5.8" fill="#fff"/><rect x="7.5" y="3.7" width="1" height="1.2" fill="#0a9b28"/><rect x="7.5" y="6" width="1" height="1.2" fill="#0a9b28"/><path d="M15.4 3.5 H13.6 Q12.7 3.5 12.7 4.5 V7.5 Q12.7 8.5 13.6 8.5 H15.4" stroke="#666" stroke-width="1.1" fill="none"/></svg><svg class="b" style="left:1192.5px;top:279px;" width="16" height="11" viewBox="0 0 16 11"><path d="M0.9 8.5 V4.3 Q0.9 3 2.1 3 H2.5 Q3.7 3 3.7 4.3 V8.5 M0.9 6 H3.7" stroke="#666" stroke-width="1.1" fill="none"/><rect x="4.6" y="0" width="6.8" height="11" rx="0.8" fill="#0a9b28"/><rect x="6.6" y="2.6" width="2.8" height="5.8" fill="#fff"/><rect x="7.5" y="3.7" width="1" height="1.2" fill="#0a9b28"/><rect x="7.5" y="6" width="1" height="1.2" fill="#0a9b28"/><path d="M15.4 3.5 H13.6 Q12.7 3.5 12.7 4.5 V7.5 Q12.7 8.5 13.6 8.5 H15.4" stroke="#666" stroke-width="1.1" fill="none"/></svg><svg class="b" style="left:1325.5px;top:279px;" width="16" height="11" viewBox="0 0 16 11"><path d="M0.9 8.5 V4.3 Q0.9 3 2.1 3 H2.5 Q3.7 3 3.7 4.3 V8.5 M0.9 6 H3.7" stroke="#666" stroke-width="1.1" fill="none"/><rect x="4.6" y="0" width="6.8" height="11" rx="0.8" fill="#0a9b28"/><rect x="6.6" y="2.6" width="2.8" height="5.8" fill="#fff"/><rect x="7.5" y="3.7" width="1" height="1.2" fill="#0a9b28"/><rect x="7.5" y="6" width="1" height="1.2" fill="#0a9b28"/><path d="M15.4 3.5 H13.6 Q12.7 3.5 12.7 4.5 V7.5 Q12.7 8.5 13.6 8.5 H15.4" stroke="#666" stroke-width="1.1" fill="none"/></svg><div class="b" style="left:1486px;top:283px;width:8px;height:1px;background:#999"></div><div class="b" style="left:1486px;top:286px;width:8px;height:1px;background:#999"></div><div class="b" style="left:1673px;top:283px;width:8px;height:1px;background:#999"></div><div class="b" style="left:1673px;top:286px;width:8px;height:1px;background:#999"></div><svg class="b" style="left:7px;top:280px;" width="22" height="12" viewBox="0 0 22 12"><ellipse cx="5" cy="2.5" rx="2.6" ry="1.8" fill="#000"/><ellipse cx="5" cy="2.3" rx="1.2" ry="0.6" fill="#fff"/><rect x="4.4" y="3.5" width="1.2" height="5" fill="#000"/><rect x="11" y="4.8" width="5" height="1.2" fill="#000"/><path d="M18.5 1 L19.5 1 L18.8 3.5 Z" fill="#000"/><path d="M18.5 6 L19.5 6 L19.5 8 L18.5 8 Z" fill="#000"/></svg><div class="b" style="left:34px;top:299px;width:1879px;height:670px;background:#fff"></div><div class="b" style="left:4px;top:668px;width:30px;height:305px;background:#fff"></div><div class="b" style="left:33px;top:298px;width:1px;height:371px;background:#b4b4b4"></div><div class="b" style="left:4px;top:299px;width:29px;height:25px;background:repeating-linear-gradient(-45deg, #ffffff 0px, #ffffff 3.4px, #e9e9e9 3.4px, #e9e9e9 4.24px)"></div><div class="t" style="left:10.2px;top:303.95px;font-size:14px;line-height:14px;font-weight:700;color:#000;">0</div><svg class="b" style="left:41px;top:310px;" width="8" height="5" viewBox="0 0 8 5"><path d="M0 0 H7 L3.5 4 Z" fill="#000"/></svg><div class="t" style="left:57px;top:304.80px;font-size:13px;line-height:13px;font-weight:700;color:#0000ff;letter-spacing:0.076px;">Nhóm khách hàng: Khách hàng</div><div class="b" style="left:4px;top:325px;width:29px;height:25px;background:repeating-linear-gradient(-45deg, #ffffff 0px, #ffffff 3.4px, #e9e9e9 3.4px, #e9e9e9 4.24px)"></div><div class="b" style="left:4px;top:324px;width:29px;height:1px;background:#b4b4b4"></div><div class="b" style="left:54px;top:324px;width:1859px;height:1px;background:#b4b4b4"></div><div class="b" style="left:54px;top:324px;width:1px;height:27px;background:#b4b4b4"></div><div class="b" style="left:55px;top:325px;width:1858px;height:25px;background:#f4f4f4"></div><div class="b" style="left:439px;top:325px;width:132px;height:25px;background:linear-gradient(90deg,#ffff00,#ffff60)"></div><svg class="b" style="left:9px;top:333px;" width="5" height="8" viewBox="0 0 5 8"><path d="M0.5 0 L4.5 4 L0.5 8 Z" fill="#000"/></svg><div class="t" style="left:18.5px;top:330.65px;font-size:14px;line-height:14px;font-weight:700;color:#000;">1</div><div class="b" style="left:174px;top:324px;width:1px;height:27px;background:#d0d0d0"></div><div class="b" style="left:438px;top:324px;width:1px;height:27px;background:#d0d0d0"></div><div class="b" style="left:571px;top:324px;width:1px;height:27px;background:#d0d0d0"></div><div class="b" style="left:729px;top:324px;width:1px;height:27px;background:#d0d0d0"></div><div class="b" style="left:885px;top:324px;width:1px;height:27px;background:#d0d0d0"></div><div class="b" style="left:1055px;top:324px;width:1px;height:27px;background:#d0d0d0"></div><div class="b" style="left:1188px;top:324px;width:1px;height:27px;background:#d0d0d0"></div><div class="b" style="left:1321px;top:324px;width:1px;height:27px;background:#d0d0d0"></div><div class="b" style="left:1477px;top:324px;width:1px;height:27px;background:#d0d0d0"></div><div class="b" style="left:1664px;top:324px;width:1px;height:27px;background:#d0d0d0"></div><div class="t" style="left:59.4px;top:330.15px;font-size:14px;line-height:14px;font-weight:400;color:#000;letter-spacing:-0.500px;transform:scaleX(0.9792);transform-origin:left center;">ch</div><div class="t" style="left:179.4px;top:330.15px;font-size:14px;line-height:14px;font-weight:400;color:#000;letter-spacing:-0.500px;transform:scaleX(0.9561);transform-origin:left center;">Chị Hiền</div><div class="t" style="left:443.3px;top:331.20px;font-size:13px;line-height:13px;font-weight:700;color:#ff0000;letter-spacing:-0.500px;transform:scaleX(0.9965);transform-origin:left center;">Cao kỳ</div><div class="t" style="right:259.29999999999995px;top:330.15px;font-size:14px;line-height:14px;font-weight:400;color:#000;letter-spacing:-0.500px;transform:scaleX(0.9593);transform-origin:right center;">0</div><div class="t" style="right:10.299999999999955px;top:330.15px;font-size:14px;line-height:14px;font-weight:400;color:#000;letter-spacing:0.088px;">5,000,000</div><div class="b" style="left:4px;top:351px;width:29px;height:25px;background:repeating-linear-gradient(-45deg, #ffffff 0px, #ffffff 3.4px, #e9e9e9 3.4px, #e9e9e9 4.24px)"></div><div class="b" style="left:4px;top:350px;width:29px;height:1px;background:#b4b4b4"></div><div class="b" style="left:54px;top:350px;width:1859px;height:1px;background:#b4b4b4"></div><div class="b" style="left:54px;top:350px;width:1px;height:27px;background:#b4b4b4"></div><div class="t" style="left:10.6px;top:356.65px;font-size:14px;line-height:14px;font-weight:700;color:#000;">2</div><div class="b" style="left:174px;top:350px;width:1px;height:27px;background:#d0d0d0"></div><div class="b" style="left:438px;top:350px;width:1px;height:27px;background:#d0d0d0"></div><div class="b" style="left:571px;top:350px;width:1px;height:27px;background:#d0d0d0"></div><div class="b" style="left:729px;top:350px;width:1px;height:27px;background:#d0d0d0"></div><div class="b" style="left:885px;top:350px;width:1px;height:27px;background:#d0d0d0"></div><div class="b" style="left:1055px;top:350px;width:1px;height:27px;background:#d0d0d0"></div><div class="b" style="left:1188px;top:350px;width:1px;height:27px;background:#d0d0d0"></div><div class="b" style="left:1321px;top:350px;width:1px;height:27px;background:#d0d0d0"></div><div class="b" style="left:1477px;top:350px;width:1px;height:27px;background:#d0d0d0"></div><div class="b" style="left:1664px;top:350px;width:1px;height:27px;background:#d0d0d0"></div><div class="t" style="left:59.4px;top:356.15px;font-size:14px;line-height:14px;font-weight:400;color:#000;letter-spacing:0.020px;">trang</div><div class="t" style="left:179.4px;top:356.15px;font-size:14px;line-height:14px;font-weight:400;color:#000;letter-spacing:-0.338px;">Chị Trang</div><div class="t" style="left:443.4px;top:356.15px;font-size:14px;line-height:14px;font-weight:400;color:#000;letter-spacing:-0.175px;">Trường tiểu học Hòa Bình</div><div class="t" style="right:259.29999999999995px;top:356.15px;font-size:14px;line-height:14px;font-weight:400;color:#000;letter-spacing:0.102px;">50,000,000</div><div class="t" style="right:10.299999999999955px;top:356.15px;font-size:14px;line-height:14px;font-weight:400;color:#000;letter-spacing:0.088px;">3,000,000</div><div class="b" style="left:4px;top:376px;width:29px;height:1px;background:#b4b4b4"></div><div class="b" style="left:54px;top:376px;width:1859px;height:2px;background:#b4b4b4"></div><div class="b" style="left:4px;top:377px;width:29px;height:33px;background:repeating-linear-gradient(-45deg, #ffffff 0px, #ffffff 3.4px, #e9e9e9 3.4px, #e9e9e9 4.24px)"></div><div class="b" style="left:54px;top:378px;width:1859px;height:32px;background:repeating-linear-gradient(-45deg, #ffffff 0px, #ffffff 3.4px, #e9e9e9 3.4px, #e9e9e9 4.24px)"></div><div class="b" style="left:54px;top:376px;width:1px;height:34px;background:#b4b4b4"></div><div class="b" style="left:176px;top:380px;width:262px;height:28px;background:#fff;border:1px dashed #c8c8c8"></div><div class="t" style="right:1488px;top:388.40px;font-size:13px;line-height:13px;font-weight:700;color:#ff00ff;letter-spacing:0.105px;">Có 2 khách hàng</div><div class="b" style="left:4px;top:410px;width:1909px;height:1px;background:#b4b4b4"></div><div class="b" style="left:4px;top:411px;width:29px;height:25px;background:repeating-linear-gradient(-45deg, #ffffff 0px, #ffffff 3.4px, #e9e9e9 3.4px, #e9e9e9 4.24px)"></div><div class="t" style="left:10.2px;top:415.95px;font-size:14px;line-height:14px;font-weight:700;color:#000;">-1</div><svg class="b" style="left:41px;top:422px;" width="8" height="5" viewBox="0 0 8 5"><path d="M0 0 H7 L3.5 4 Z" fill="#000"/></svg><div class="t" style="left:57px;top:416.80px;font-size:13px;line-height:13px;font-weight:700;color:#0000ff;letter-spacing:0.102px;">Nhóm khách hàng: Khách hàng thường xuyên</div><div class="b" style="left:4px;top:437px;width:29px;height:25px;background:repeating-linear-gradient(-45deg, #ffffff 0px, #ffffff 3.4px, #e9e9e9 3.4px, #e9e9e9 4.24px)"></div><div class="b" style="left:4px;top:436px;width:29px;height:1px;background:#b4b4b4"></div><div class="b" style="left:54px;top:436px;width:1859px;height:1px;background:#b4b4b4"></div><div class="b" style="left:54px;top:436px;width:1px;height:27px;background:#b4b4b4"></div><div class="t" style="left:10.6px;top:442.65px;font-size:14px;line-height:14px;font-weight:700;color:#000;">3</div><div class="b" style="left:174px;top:436px;width:1px;height:27px;background:#d0d0d0"></div><div class="b" style="left:438px;top:436px;width:1px;height:27px;background:#d0d0d0"></div><div class="b" style="left:571px;top:436px;width:1px;height:27px;background:#d0d0d0"></div><div class="b" style="left:729px;top:436px;width:1px;height:27px;background:#d0d0d0"></div><div class="b" style="left:885px;top:436px;width:1px;height:27px;background:#d0d0d0"></div><div class="b" style="left:1055px;top:436px;width:1px;height:27px;background:#d0d0d0"></div><div class="b" style="left:1188px;top:436px;width:1px;height:27px;background:#d0d0d0"></div><div class="b" style="left:1321px;top:436px;width:1px;height:27px;background:#d0d0d0"></div><div class="b" style="left:1477px;top:436px;width:1px;height:27px;background:#d0d0d0"></div><div class="b" style="left:1664px;top:436px;width:1px;height:27px;background:#d0d0d0"></div><div class="t" style="left:59.4px;top:442.15px;font-size:14px;line-height:14px;font-weight:400;color:#000;letter-spacing:-0.500px;transform:scaleX(0.9851);transform-origin:left center;">cloan</div><div class="t" style="left:179.4px;top:442.15px;font-size:14px;line-height:14px;font-weight:400;color:#000;letter-spacing:-0.490px;">Cô Loan</div><div class="t" style="left:443.4px;top:442.15px;font-size:14px;line-height:14px;font-weight:400;color:#000;letter-spacing:-0.310px;">Sông cầu</div><div class="t" style="right:259.29999999999995px;top:442.15px;font-size:14px;line-height:14px;font-weight:400;color:#000;letter-spacing:-0.500px;transform:scaleX(0.9593);transform-origin:right center;">0</div><div class="t" style="right:10.299999999999955px;top:442.15px;font-size:14px;line-height:14px;font-weight:400;color:#000;letter-spacing:-0.500px;transform:scaleX(0.9593);transform-origin:right center;">0</div><div class="b" style="left:4px;top:462px;width:29px;height:1px;background:#b4b4b4"></div><div class="b" style="left:54px;top:462px;width:1859px;height:2px;background:#b4b4b4"></div><div class="b" style="left:4px;top:463px;width:29px;height:33px;background:repeating-linear-gradient(-45deg, #ffffff 0px, #ffffff 3.4px, #e9e9e9 3.4px, #e9e9e9 4.24px)"></div><div class="b" style="left:54px;top:464px;width:1859px;height:32px;background:repeating-linear-gradient(-45deg, #ffffff 0px, #ffffff 3.4px, #e9e9e9 3.4px, #e9e9e9 4.24px)"></div><div class="b" style="left:54px;top:462px;width:1px;height:34px;background:#b4b4b4"></div><div class="b" style="left:176px;top:466px;width:262px;height:28px;background:#fff;border:1px dashed #c8c8c8"></div><div class="t" style="right:1488px;top:474.40px;font-size:13px;line-height:13px;font-weight:700;color:#ff00ff;letter-spacing:0.105px;">Có 1 khách hàng</div><div class="b" style="left:4px;top:496px;width:1909px;height:1px;background:#b4b4b4"></div><div class="b" style="left:4px;top:497px;width:29px;height:25px;background:repeating-linear-gradient(-45deg, #ffffff 0px, #ffffff 3.4px, #e9e9e9 3.4px, #e9e9e9 4.24px)"></div><div class="t" style="left:10.2px;top:501.95px;font-size:14px;line-height:14px;font-weight:700;color:#000;">-2</div><svg class="b" style="left:41px;top:508px;" width="8" height="5" viewBox="0 0 8 5"><path d="M0 0 H7 L3.5 4 Z" fill="#000"/></svg><div class="t" style="left:57px;top:502.80px;font-size:13px;line-height:13px;font-weight:700;color:#0000ff;letter-spacing:0.049px;">Nhóm khách hàng: Khách lẻ</div><div class="b" style="left:4px;top:523px;width:29px;height:25px;background:repeating-linear-gradient(-45deg, #ffffff 0px, #ffffff 3.4px, #e9e9e9 3.4px, #e9e9e9 4.24px)"></div><div class="b" style="left:4px;top:522px;width:29px;height:1px;background:#b4b4b4"></div><div class="b" style="left:54px;top:522px;width:1859px;height:1px;background:#b4b4b4"></div><div class="b" style="left:54px;top:522px;width:1px;height:27px;background:#b4b4b4"></div><div class="t" style="left:10.6px;top:528.65px;font-size:14px;line-height:14px;font-weight:700;color:#000;">4</div><div class="b" style="left:174px;top:522px;width:1px;height:27px;background:#d0d0d0"></div><div class="b" style="left:438px;top:522px;width:1px;height:27px;background:#d0d0d0"></div><div class="b" style="left:571px;top:522px;width:1px;height:27px;background:#d0d0d0"></div><div class="b" style="left:729px;top:522px;width:1px;height:27px;background:#d0d0d0"></div><div class="b" style="left:885px;top:522px;width:1px;height:27px;background:#d0d0d0"></div><div class="b" style="left:1055px;top:522px;width:1px;height:27px;background:#d0d0d0"></div><div class="b" style="left:1188px;top:522px;width:1px;height:27px;background:#d0d0d0"></div><div class="b" style="left:1321px;top:522px;width:1px;height:27px;background:#d0d0d0"></div><div class="b" style="left:1477px;top:522px;width:1px;height:27px;background:#d0d0d0"></div><div class="b" style="left:1664px;top:522px;width:1px;height:27px;background:#d0d0d0"></div><div class="t" style="left:59.4px;top:528.15px;font-size:14px;line-height:14px;font-weight:400;color:#000;letter-spacing:-0.500px;transform:scaleX(0.8814);transform-origin:left center;">KML</div><div class="t" style="left:179.4px;top:528.15px;font-size:14px;line-height:14px;font-weight:400;color:#000;letter-spacing:-0.500px;transform:scaleX(0.9925);transform-origin:left center;">Khách lẻ</div><div class="t" style="right:259.29999999999995px;top:528.15px;font-size:14px;line-height:14px;font-weight:400;color:#000;letter-spacing:-0.500px;transform:scaleX(0.9593);transform-origin:right center;">0</div><div class="t" style="right:10.299999999999955px;top:528.15px;font-size:14px;line-height:14px;font-weight:400;color:#000;letter-spacing:-0.500px;transform:scaleX(0.9593);transform-origin:right center;">0</div><div class="b" style="left:4px;top:548px;width:29px;height:1px;background:#b4b4b4"></div><div class="b" style="left:54px;top:548px;width:1859px;height:2px;background:#b4b4b4"></div><div class="b" style="left:4px;top:549px;width:29px;height:33px;background:repeating-linear-gradient(-45deg, #ffffff 0px, #ffffff 3.4px, #e9e9e9 3.4px, #e9e9e9 4.24px)"></div><div class="b" style="left:54px;top:550px;width:1859px;height:32px;background:repeating-linear-gradient(-45deg, #ffffff 0px, #ffffff 3.4px, #e9e9e9 3.4px, #e9e9e9 4.24px)"></div><div class="b" style="left:54px;top:548px;width:1px;height:34px;background:#b4b4b4"></div><div class="b" style="left:176px;top:552px;width:262px;height:28px;background:#fff;border:1px dashed #c8c8c8"></div><div class="t" style="right:1488px;top:560.40px;font-size:13px;line-height:13px;font-weight:700;color:#ff00ff;letter-spacing:0.105px;">Có 1 khách hàng</div><div class="b" style="left:4px;top:582px;width:1909px;height:1px;background:#b4b4b4"></div><div class="b" style="left:4px;top:583px;width:29px;height:25px;background:repeating-linear-gradient(-45deg, #ffffff 0px, #ffffff 3.4px, #e9e9e9 3.4px, #e9e9e9 4.24px)"></div><div class="t" style="left:10.2px;top:587.95px;font-size:14px;line-height:14px;font-weight:700;color:#000;">-3</div><svg class="b" style="left:41px;top:594px;" width="8" height="5" viewBox="0 0 8 5"><path d="M0 0 H7 L3.5 4 Z" fill="#000"/></svg><div class="t" style="left:57px;top:588.80px;font-size:13px;line-height:13px;font-weight:700;color:#0000ff;letter-spacing:0.060px;">Nhóm khách hàng: Quận 3</div><div class="b" style="left:4px;top:609px;width:29px;height:25px;background:repeating-linear-gradient(-45deg, #ffffff 0px, #ffffff 3.4px, #e9e9e9 3.4px, #e9e9e9 4.24px)"></div><div class="b" style="left:4px;top:608px;width:29px;height:1px;background:#b4b4b4"></div><div class="b" style="left:54px;top:608px;width:1859px;height:1px;background:#b4b4b4"></div><div class="b" style="left:54px;top:608px;width:1px;height:27px;background:#b4b4b4"></div><div class="t" style="left:10.6px;top:614.65px;font-size:14px;line-height:14px;font-weight:700;color:#000;">5</div><div class="b" style="left:174px;top:608px;width:1px;height:27px;background:#d0d0d0"></div><div class="b" style="left:438px;top:608px;width:1px;height:27px;background:#d0d0d0"></div><div class="b" style="left:571px;top:608px;width:1px;height:27px;background:#d0d0d0"></div><div class="b" style="left:729px;top:608px;width:1px;height:27px;background:#d0d0d0"></div><div class="b" style="left:885px;top:608px;width:1px;height:27px;background:#d0d0d0"></div><div class="b" style="left:1055px;top:608px;width:1px;height:27px;background:#d0d0d0"></div><div class="b" style="left:1188px;top:608px;width:1px;height:27px;background:#d0d0d0"></div><div class="b" style="left:1321px;top:608px;width:1px;height:27px;background:#d0d0d0"></div><div class="b" style="left:1477px;top:608px;width:1px;height:27px;background:#d0d0d0"></div><div class="b" style="left:1664px;top:608px;width:1px;height:27px;background:#d0d0d0"></div><div class="t" style="left:59.4px;top:614.15px;font-size:14px;line-height:14px;font-weight:400;color:#000;letter-spacing:-0.500px;transform:scaleX(0.9981);transform-origin:left center;">KH0003</div><div class="t" style="left:179.4px;top:614.15px;font-size:14px;line-height:14px;font-weight:400;color:#000;letter-spacing:-0.268px;">Nguyễn Hoàng Thiện</div><div class="t" style="left:443.4px;top:614.15px;font-size:14px;line-height:14px;font-weight:400;color:#000;letter-spacing:-0.331px;">Quận 3 Hồ Chí Minh</div><div class="t" style="right:259.29999999999995px;top:614.15px;font-size:14px;line-height:14px;font-weight:400;color:#000;letter-spacing:0.088px;">5,000,000</div><div class="t" style="right:10.299999999999955px;top:614.15px;font-size:14px;line-height:14px;font-weight:400;color:#000;letter-spacing:-0.500px;transform:scaleX(0.9593);transform-origin:right center;">0</div><div class="b" style="left:4px;top:634px;width:29px;height:1px;background:#b4b4b4"></div><div class="b" style="left:54px;top:634px;width:1859px;height:2px;background:#b4b4b4"></div><div class="b" style="left:4px;top:635px;width:29px;height:33px;background:repeating-linear-gradient(-45deg, #ffffff 0px, #ffffff 3.4px, #e9e9e9 3.4px, #e9e9e9 4.24px)"></div><div class="b" style="left:54px;top:636px;width:1859px;height:32px;background:repeating-linear-gradient(-45deg, #ffffff 0px, #ffffff 3.4px, #e9e9e9 3.4px, #e9e9e9 4.24px)"></div><div class="b" style="left:54px;top:634px;width:1px;height:34px;background:#b4b4b4"></div><div class="b" style="left:176px;top:638px;width:262px;height:28px;background:#fff;border:1px dashed #c8c8c8"></div><div class="t" style="right:1488px;top:646.40px;font-size:13px;line-height:13px;font-weight:700;color:#ff00ff;letter-spacing:0.105px;">Có 1 khách hàng</div><div class="b" style="left:4px;top:668px;width:1909px;height:1px;background:#b4b4b4"></div><div class="b" style="left:4px;top:298px;width:1909px;height:1px;background:#b4b4b4"></div><div class="b" style="left:4px;top:410px;width:1909px;height:1px;background:#b4b4b4"></div><div class="b" style="left:4px;top:496px;width:1909px;height:1px;background:#b4b4b4"></div><div class="b" style="left:4px;top:582px;width:1909px;height:1px;background:#b4b4b4"></div><div class="b" style="left:4px;top:324px;width:29px;height:1px;background:#b4b4b4"></div><div class="b" style="left:4px;top:668px;width:1909px;height:1px;background:#b4b4b4"></div><div class="b" style="left:34px;top:669px;width:1879px;height:304px;background:#fff"></div><div class="b" style="left:4px;top:973px;width:1909px;height:1px;background:#b4b4b4"></div><div class="b" style="left:4px;top:974px;width:1909px;height:34px;background:repeating-linear-gradient(-45deg, #ffffff 0px, #ffffff 3.4px, #e9e9e9 3.4px, #e9e9e9 4.24px)"></div><div class="b" style="left:176px;top:977px;width:262px;height:28px;background:#fff;border:1px dashed #c8c8c8"></div><div class="t" style="right:1487.3px;top:983.70px;font-size:13px;line-height:13px;font-weight:700;color:#ff0000;letter-spacing:0.169px;">Có 5 khách hàng</div><div class="b" style="left:1666px;top:977px;width:245px;height:28px;background:#fff;border:1px dashed #c8c8c8"></div><div class="t" style="right:14.5px;top:983.50px;font-size:13px;line-height:13px;font-weight:700;color:#ff0000;letter-spacing:0.707px;">8,000,000</div><div class="b" style="left:0px;top:1012px;width:1920px;height:28px;background:#fff"></div><div class="b" style="left:0px;top:1013px;width:1920px;height:1px;border-top:1px dashed #b0b0b0"></div><div class="t" style="left:8px;top:1022.59px;font-size:11px;line-height:11px;font-weight:700;color:#000;letter-spacing:0.388px;">Chào mừng: Administrator đến với phần mềm MekongSoft</div><div class="t" style="left:347.5px;top:1022.59px;font-size:11px;line-height:11px;font-weight:400;color:#999;">|</div><div class="t" style="left:362.7px;top:1022.59px;font-size:11px;line-height:11px;font-weight:700;color:#000;letter-spacing:0.297px;">Version: 4.2.0</div><div class="t" style="left:450.5px;top:1022.59px;font-size:11px;line-height:11px;font-weight:400;color:#f08080;">|</div><div class="t" style="left:466px;top:1022.59px;font-size:11px;line-height:11px;font-weight:700;color:#ff0000;letter-spacing:0.596px;">Ngày: 12/10/2023 10:54:03 SA</div><div class="b" style="left:1613px;top:1014px;width:1px;height:26px;border-left:1px dashed #b0b0b0"></div><div class="t" style="left:1624.5px;top:1022.69px;font-size:11px;line-height:11px;font-weight:700;color:#000;letter-spacing:0.414px;">@2023 MekongSoft. Thông tin hỗ trợ: 0901 000 508</div><div class="b" style="left:528px;top:272px;width:946px;height:533px;background:#f0f0f0;border:1px solid #707070;box-shadow:0 3px 15px 1px rgba(0,0,0,0.24)"></div><div class="b" style="left:529px;top:273px;width:944px;height:72px;background:#fff"></div><svg class="b" style="left:538px;top:280px;" width="14" height="14" viewBox="0 0 14 14"><rect x="0.5" y="0.5" width="13" height="13" fill="#fff" stroke="#bbb" stroke-width="0.8"/><rect x="6" y="1" width="7" height="7" fill="#f2c200"/><rect x="7" y="2" width="5" height="4" fill="#ffe680"/><rect x="1" y="6" width="5" height="6" fill="#c8161d"/><rect x="2" y="7" width="3" height="2" fill="#fff" opacity="0.6"/><rect x="7" y="9" width="6" height="4" fill="#4a8ad8"/></svg><div class="t" style="left:558px;top:281.84px;font-size:12px;line-height:12px;font-weight:400;color:#000;letter-spacing:-0.238px;">Xuất ra file Excel</div><svg class="b" style="left:1452px;top:281px;" width="12" height="12" viewBox="0 0 12 12"><path d="M0.5 0.5 L11 11 M11 0.5 L0.5 11" stroke="#111" stroke-width="1.1"/></svg><svg class="b" style="left:541px;top:317px;" width="14" height="12" viewBox="0 0 14 12"><path d="M1 6 H13 M6 1 L1 6 L6 11" stroke="#c8c8c8" stroke-width="1.2" fill="none"/></svg><svg class="b" style="left:571px;top:317px;" width="14" height="12" viewBox="0 0 14 12"><path d="M13 6 H1 M8 1 L13 6 L8 11" stroke="#c8c8c8" stroke-width="1.2" fill="none"/></svg><svg class="b" style="left:598px;top:320px;" width="8" height="5" viewBox="0 0 8 5"><path d="M0.5 0.5 L4 4 L7.5 0.5" stroke="#c8c8c8" stroke-width="1" fill="none"/></svg><svg class="b" style="left:615px;top:317px;" width="14" height="14" viewBox="0 0 14 14"><path d="M7 13.5 V1.5 M1.5 7 L7 1.5 L12.5 7" stroke="#555" stroke-width="1.4" fill="none"/></svg><div class="b" style="left:635px;top:308px;width:612px;height:30px;background:#fff;border:1px solid #d9d9d9"></div><div class="b" style="left:1213px;top:308px;width:1px;height:30px;background:#d9d9d9"></div><svg class="b" style="left:638px;top:314px;" width="17" height="17" viewBox="0 0 17 17"><path d="M5.5 0 H10.5 V8 H15.8 L8 16 L0.2 8 H5.5 Z" fill="#3b8de3"/></svg><svg class="b" style="left:661.5px;top:320px;" width="5" height="7" viewBox="0 0 5 7"><path d="M0.7 0.7 L3.6 3.5 L0.7 6.3" stroke="#777" stroke-width="1.3" fill="none"/></svg><svg class="b" style="left:723.5px;top:320px;" width="5" height="7" viewBox="0 0 5 7"><path d="M0.7 0.7 L3.6 3.5 L0.7 6.3" stroke="#777" stroke-width="1.3" fill="none"/></svg><svg class="b" style="left:805.5px;top:320px;" width="5" height="7" viewBox="0 0 5 7"><path d="M0.7 0.7 L3.6 3.5 L0.7 6.3" stroke="#777" stroke-width="1.3" fill="none"/></svg><div class="t" style="left:675.3px;top:316.74px;font-size:12px;line-height:12px;font-weight:400;color:#000;letter-spacing:-0.500px;transform:scaleX(0.9726);transform-origin:left center;">This PC</div><div class="t" style="left:737.5px;top:316.74px;font-size:12px;line-height:12px;font-weight:400;color:#000;letter-spacing:-0.159px;">Downloads</div><svg class="b" style="left:1193px;top:321px;" width="10" height="6" viewBox="0 0 10 6"><path d="M0.8 0.8 L5 5 L9.2 0.8" stroke="#666" stroke-width="1.7" fill="none"/></svg><svg class="b" style="left:1225px;top:317px;" width="13" height="13" viewBox="0 0 13 13"><path d="M9.9 3.6 A4.6 4.6 0 1 1 5.8 2.2" stroke="#666" stroke-width="1.6" fill="none"/><path d="M5 0.2 L9.2 2.3 L5.4 4.8 Z" fill="#666"/></svg><div class="b" style="left:1259px;top:308px;width:202px;height:30px;background:#fff;border:1px solid #d9d9d9"></div><svg class="b" style="left:1273px;top:316px;" width="14" height="14" viewBox="0 0 14 14"><circle cx="8.8" cy="5.1" r="3.8" stroke="#777" stroke-width="0.9" fill="none"/><path d="M6.2 7.8 L1 13" stroke="#777" stroke-width="0.9"/></svg><div class="t" style="left:1300.35px;top:316.84px;font-size:12px;line-height:12px;font-weight:400;color:#6d6d6d;letter-spacing:-0.269px;">Search Downloads</div><div class="b" style="left:529px;top:345px;width:944px;height:30px;background:#f5f6f7"></div><div class="b" style="left:529px;top:375px;width:944px;height:1px;background:#e9e9e9"></div><div class="t" style="left:547.3px;top:353.54px;font-size:12px;line-height:12px;font-weight:400;color:#1e3966;letter-spacing:-0.243px;">Organize</div><svg class="b" style="left:600px;top:358px;" width="8" height="5" viewBox="0 0 8 5"><path d="M0 0 H7.5 L3.75 4 Z" fill="#1e3966"/></svg><div class="t" style="left:638.4px;top:353.54px;font-size:12px;line-height:12px;font-weight:400;color:#1e3966;letter-spacing:0.027px;">New folder</div><svg class="b" style="left:1379px;top:352px;" width="16" height="15" viewBox="0 0 16 15"><rect x="0.5" y="0.5" width="8" height="14" fill="#fff" stroke="#8c8c8c"/><path d="M0.5 7.5 H8.5" stroke="#8c8c8c"/><rect x="2" y="2" width="5" height="4" fill="#3d8a4c"/><rect x="2" y="2" width="5" height="1.5" fill="#4a8ad8"/><rect x="2" y="9" width="5" height="4" fill="#7bb24a"/><rect x="2" y="9" width="2" height="2" fill="#e06020"/><path d="M10 1.5 H15 M10 3.5 H12.5 M10 8.5 H15 M10 10.5 H12.5" stroke="#555" stroke-width="0.9"/></svg><svg class="b" style="left:1404.5px;top:358px;" width="8" height="5" viewBox="0 0 8 5"><path d="M0 0 H7.5 L3.75 4 Z" fill="#1c3966"/></svg><svg class="b" style="left:1442px;top:352px;" width="16" height="16" viewBox="0 0 16 16"><circle cx="8" cy="8" r="7.8" fill="#0066cc"/><text x="8" y="12.5" font-size="12" font-weight="700" fill="#fff" text-anchor="middle" font-family="Liberation Sans">?</text></svg><div class="b" style="left:529px;top:376px;width:142px;height:311px;background:#fff"></div><div class="b" style="left:671px;top:376px;width:16px;height:311px;background:#f0f0f0"></div><div class="b" style="left:671px;top:419px;width:16px;height:244px;background:#cdcdcd"></div><svg class="b" style="left:674px;top:382px;" width="10" height="6" viewBox="0 0 10 6"><path d="M1 5 L5 1 L9 5" stroke="#606060" stroke-width="1.6" fill="none"/></svg><svg class="b" style="left:674px;top:676px;" width="10" height="6" viewBox="0 0 10 6"><path d="M1 1 L5 5 L9 1" stroke="#606060" stroke-width="1.6" fill="none"/></svg><div class="b" style="left:687px;top:376px;width:2px;height:311px;background:#fff"></div><div class="b" style="left:688px;top:376px;width:1px;height:311px;background:#f0f0f0"></div><div class="b" style="left:530px;top:480px;width:140px;height:24px;background:#d9d9d9"></div><div class="t" style="left:574.4px;top:389.84px;font-size:12px;line-height:12px;font-weight:400;color:#000;letter-spacing:-0.500px;transform:scaleX(0.9726);transform-origin:left center;">This PC</div><div class="t" style="left:582.3px;top:413.84px;font-size:12px;line-height:12px;font-weight:400;color:#000;letter-spacing:-0.318px;">3D Objects</div><div class="t" style="left:582.3px;top:437.84px;font-size:12px;line-height:12px;font-weight:400;color:#000;letter-spacing:-0.289px;">Desktop</div><div class="t" style="left:582.3px;top:461.84px;font-size:12px;line-height:12px;font-weight:400;color:#000;letter-spacing:-0.038px;">Documents</div><div class="t" style="left:582.3px;top:485.84px;font-size:12px;line-height:12px;font-weight:400;color:#000;letter-spacing:-0.097px;">Downloads</div><div class="t" style="left:582.5px;top:509.84px;font-size:12px;line-height:12px;font-weight:400;color:#000;letter-spacing:-0.086px;">Music</div><div class="t" style="left:582.5px;top:533.84px;font-size:12px;line-height:12px;font-weight:400;color:#000;letter-spacing:-0.266px;">Pictures</div><div class="t" style="left:582.5px;top:557.84px;font-size:12px;line-height:12px;font-weight:400;color:#000;letter-spacing:-0.497px;">Videos</div><div class="t" style="left:582.5px;top:581.84px;font-size:12px;line-height:12px;font-weight:400;color:#000;letter-spacing:-0.335px;">Local Disk (C:)</div><div class="t" style="left:582.5px;top:605.84px;font-size:12px;line-height:12px;font-weight:400;color:#000;letter-spacing:-0.467px;">Local Disk (E:)</div><div class="t" style="left:582.5px;top:629.84px;font-size:12px;line-height:12px;font-weight:400;color:#000;letter-spacing:-0.269px;">New Volume (G:)</div><div class="t" style="left:574.2px;top:661.84px;font-size:12px;line-height:12px;font-weight:400;color:#000;letter-spacing:0.097px;">Network</div><svg class="b" style="left:553px;top:389px;" width="17" height="16" viewBox="0 0 17 16"><rect x="0.5" y="0.5" width="15.5" height="10" fill="#5cc4f5" stroke="#3a9ad9" stroke-width="1"/><rect x="1.5" y="1.5" width="13.5" height="8" fill="#72d0fa"/><path d="M8.25 11 V13" stroke="#8aa" stroke-width="1.2"/><path d="M3 14.5 H13.5" stroke="#8aa" stroke-width="1.4"/></svg><svg class="b" style="left:561px;top:412px;" width="16" height="16" viewBox="0 0 16 16"><path d="M8 0.5 L15.5 3.5 V12 L8 15.5 L0.5 12 V3.5 Z" fill="#7fd8e6"/><path d="M8 6.5 L15.5 3.5 V12 L8 15.5 Z" fill="#1f9fb8"/><path d="M0.5 3.5 L8 6.5 V15.5 L0.5 12 Z" fill="#b5eef5"/></svg><svg class="b" style="left:561px;top:438px;" width="16" height="13" viewBox="0 0 16 13"><rect x="0" y="0" width="16" height="12" fill="#1e88e5"/><rect x="1" y="1" width="14" height="9.5" fill="#2f9af2"/><path d="M1 11 H15" stroke="#fff" stroke-width="0.6" stroke-dasharray="1 6"/></svg><svg class="b" style="left:562px;top:460px;" width="14" height="16" viewBox="0 0 14 16"><path d="M0.5 0.5 H9 L13.5 5 V15.5 H0.5 Z" fill="#fff" stroke="#8a8a8a"/><path d="M9 0.5 V5 H13.5" fill="none" stroke="#8a8a8a"/><path d="M3 4 H7 M3 6.5 H11 M3 8.5 H11 M3 10.5 H7 M3 12.5 H11" stroke="#4a8ad8" stroke-width="0.9"/><rect x="8" y="9.5" width="3" height="2" fill="#3d8a4c"/></svg><svg class="b" style="left:561px;top:484px;" width="16" height="16" viewBox="0 0 16 16"><path d="M5.5 0 H10.5 V7.5 H15.8 L8 15.5 L0.2 7.5 H5.5 Z" fill="#3b8de3"/></svg><svg class="b" style="left:563px;top:508px;" width="12" height="16" viewBox="0 0 12 16"><ellipse cx="3.5" cy="13" rx="3.5" ry="2.6" fill="#1e88e5"/><path d="M6 13 V0.5 C7 3 11 4 10 9" stroke="#1e88e5" stroke-width="1.6" fill="none"/></svg><svg class="b" style="left:561px;top:533px;" width="16" height="13" viewBox="0 0 16 13"><rect x="0.5" y="0.5" width="15" height="12" fill="#fff" stroke="#8a8a8a"/><rect x="2" y="2" width="12" height="9" fill="#7fb2e0"/><path d="M2 9 L6 6 L9 8 L14 5 V11 H2 Z" fill="#3e8e5a"/></svg><svg class="b" style="left:563px;top:556px;" width="13" height="16" viewBox="0 0 13 16"><rect x="0" y="0" width="13" height="16" fill="#222"/><rect x="3" y="2" width="7" height="5.5" fill="#f0a030"/><rect x="3" y="8.5" width="7" height="5.5" fill="#4a8ad8"/><path d="M1.5 1 V15 M11.5 1 V15" stroke="#fff" stroke-width="1.2" stroke-dasharray="1 1.2"/></svg><svg class="b" style="left:560px;top:580px;" width="18" height="14" viewBox="0 0 18 14"><rect x="0" y="0" width="3" height="3" fill="#1e88e5"/><rect x="3.5" y="0" width="3" height="3" fill="#1e88e5"/><rect x="0" y="3.5" width="3" height="3" fill="#1e88e5"/><rect x="3.5" y="3.5" width="3" height="3" fill="#1e88e5"/><path d="M2 8 L4 6 H15 L17 8 Z" fill="#d8d8d8"/><rect x="2" y="8" width="15" height="4.5" rx="0.8" fill="#333"/><rect x="13" y="10" width="2" height="1" fill="#6f6"/></svg><svg class="b" style="left:560px;top:604px;" width="18" height="14" viewBox="0 0 18 14"><path d="M2 8 L4 6 H15 L17 8 Z" fill="#d8d8d8"/><rect x="2" y="8" width="15" height="4.5" rx="0.8" fill="#333"/><rect x="13" y="10" width="2" height="1" fill="#6f6"/></svg><svg class="b" style="left:560px;top:628px;" width="18" height="14" viewBox="0 0 18 14"><path d="M2 8 L4 6 H15 L17 8 Z" fill="#d8d8d8"/><rect x="2" y="8" width="15" height="4.5" rx="0.8" fill="#333"/><rect x="13" y="10" width="2" height="1" fill="#6f6"/></svg><svg class="b" style="left:553px;top:659px;" width="17" height="17" viewBox="0 0 17 17"><circle cx="11.5" cy="6" r="5.3" fill="#5aaee8"/><path d="M8 2 C10 5 13 5 15.5 4 M7 7 H16" stroke="#fff" stroke-width="0.6" fill="none"/><rect x="0.5" y="5.5" width="10" height="7" fill="#5cc4f5" stroke="#3a9ad9"/><path d="M5.5 13 V15 M2 16 H9" stroke="#8aa" stroke-width="1.2"/></svg><div class="b" style="left:689px;top:376px;width:768px;height:311px;background:#fff"></div><div class="b" style="left:1457px;top:376px;width:15px;height:311px;background:#f0f0f0"></div><div class="b" style="left:1457px;top:393px;width:15px;height:29px;background:#c8c8c8"></div><svg class="b" style="left:1460px;top:382px;" width="10" height="6" viewBox="0 0 10 6"><path d="M1 5 L5 1 L9 5" stroke="#606060" stroke-width="1.6" fill="none"/></svg><svg class="b" style="left:1460px;top:676px;" width="10" height="6" viewBox="0 0 10 6"><path d="M1 1 L5 5 L9 1" stroke="#606060" stroke-width="1.6" fill="none"/></svg><div class="b" style="left:691px;top:548px;width:765px;height:26px;background:#e5f3ff"></div><svg class="b" style="left:697px;top:391.5px;" width="11" height="6" viewBox="0 0 11 6"><path d="M0.6 0.6 L5.5 5.4 L10.4 0.6" stroke="#6d6d6d" stroke-width="1" fill="none"/></svg><div class="t" style="left:713px;top:387.30px;font-size:15px;line-height:15px;font-weight:400;color:#1e3287;letter-spacing:-0.277px;">Earlier this week (1)</div><div class="b" style="left:850px;top:395.5px;width:599px;height:1px;background:#e2e2e2"></div><svg class="b" style="left:697px;top:473.5px;" width="11" height="6" viewBox="0 0 11 6"><path d="M0.6 0.6 L5.5 5.4 L10.4 0.6" stroke="#6d6d6d" stroke-width="1" fill="none"/></svg><div class="t" style="left:713px;top:469.30px;font-size:15px;line-height:15px;font-weight:400;color:#1e3287;letter-spacing:-0.437px;">Last week (1)</div><div class="b" style="left:805px;top:477.5px;width:644px;height:1px;background:#e2e2e2"></div><svg class="b" style="left:697px;top:556.9px;" width="11" height="6" viewBox="0 0 11 6"><path d="M0.6 0.6 L5.5 5.4 L10.4 0.6" stroke="#6d6d6d" stroke-width="1" fill="none"/></svg><div class="t" style="left:713px;top:552.70px;font-size:15px;line-height:15px;font-weight:400;color:#1e3287;letter-spacing:-0.209px;">Last month (6)</div><div class="b" style="left:814px;top:560.9px;width:635px;height:1px;background:#e2e2e2"></div><svg class="b" style="left:710px;top:414px;" width="42" height="45" viewBox="0 0 42 45"><path d="M6.5 0.5 H28.5 L39.5 11.5 V43.5 H6.5 Z" fill="#f7f7f7" stroke="#6f6f6f" stroke-width="1"/><path d="M28.5 0.5 V11.5 H39.5" fill="none" stroke="#6f6f6f" stroke-width="1"/><rect x="1" y="11" width="22" height="21.6" rx="0.8" fill="#187a44"/><path d="M7 16.5 L17 27.8 M17 16.5 L7 27.8" stroke="#fff" stroke-width="3.2"/><path d="M25 17.7 H29.6 M31 17.7 H35.6" stroke="#2bbd6e" stroke-width="1.7"/><path d="M25 21.8 H29.6 M31 21.8 H35.6" stroke="#188a4c" stroke-width="1.7"/><path d="M25 25.8 H29.6 M31 25.8 H35.6" stroke="#0e5c32" stroke-width="1.7"/></svg><div class="t" style="left:762.2px;top:413.84px;font-size:12px;line-height:12px;font-weight:400;color:#000;letter-spacing:-0.221px;">Hàng tồn kho ban đầu _ Kho Trụ Sở</div><div class="t" style="left:762.2px;top:429.04px;font-size:12px;line-height:12px;font-weight:400;color:#000;letter-spacing:-0.285px;">Chính2023-29-09.xlsx</div><div class="t" style="left:762.2px;top:444.44px;font-size:12px;line-height:12px;font-weight:400;color:#6d6d6d;letter-spacing:-0.076px;">Microsoft Excel Worksheet</div><svg class="b" style="left:710px;top:497px;" width="42" height="45" viewBox="0 0 42 45"><path d="M6.5 0.5 H28.5 L39.5 11.5 V43.5 H6.5 Z" fill="#f7f7f7" stroke="#6f6f6f" stroke-width="1"/><path d="M28.5 0.5 V11.5 H39.5" fill="none" stroke="#6f6f6f" stroke-width="1"/><rect x="1" y="11" width="22" height="21.6" rx="0.8" fill="#187a44"/><path d="M7 16.5 L17 27.8 M17 16.5 L7 27.8" stroke="#fff" stroke-width="3.2"/><path d="M25 17.7 H29.6 M31 17.7 H35.6" stroke="#2bbd6e" stroke-width="1.7"/><path d="M25 21.8 H29.6 M31 21.8 H35.6" stroke="#188a4c" stroke-width="1.7"/><path d="M25 25.8 H29.6 M31 25.8 H35.6" stroke="#0e5c32" stroke-width="1.7"/></svg><div class="t" style="left:762.2px;top:497.04px;font-size:12px;line-height:12px;font-weight:400;color:#000;letter-spacing:-0.500px;transform:scaleX(0.9759);transform-origin:left center;">2023_10_02_09_59_58_keeping_time</div><div class="t" style="left:762.2px;top:512.34px;font-size:12px;line-height:12px;font-weight:400;color:#000;letter-spacing:-0.500px;">.xlsx</div><div class="t" style="left:762.2px;top:527.24px;font-size:12px;line-height:12px;font-weight:400;color:#6d6d6d;letter-spacing:-0.076px;">Microsoft Excel Worksheet</div><svg class="b" style="left:710px;top:580px;" width="42" height="45" viewBox="0 0 42 45"><path d="M6.5 0.5 H28.5 L39.5 11.5 V43.5 H6.5 Z" fill="#f7f7f7" stroke="#6f6f6f" stroke-width="1"/><path d="M28.5 0.5 V11.5 H39.5" fill="none" stroke="#6f6f6f" stroke-width="1"/><rect x="1" y="11" width="22" height="21.6" rx="0.8" fill="#187a44"/><path d="M7 16.5 L17 27.8 M17 16.5 L7 27.8" stroke="#fff" stroke-width="3.2"/><path d="M25 17.7 H29.6 M31 17.7 H35.6" stroke="#2bbd6e" stroke-width="1.7"/><path d="M25 21.8 H29.6 M31 21.8 H35.6" stroke="#188a4c" stroke-width="1.7"/><path d="M25 25.8 H29.6 M31 25.8 H35.6" stroke="#0e5c32" stroke-width="1.7"/></svg><div class="t" style="left:762.3px;top:579.14px;font-size:12px;line-height:12px;font-weight:400;color:#000;letter-spacing:-0.495px;">PT PM.xlsx</div><div class="t" style="left:762.3px;top:595.14px;font-size:12px;line-height:12px;font-weight:400;color:#6d6d6d;letter-spacing:-0.076px;">Microsoft Excel Worksheet</div><div class="t" style="left:762.3px;top:611.24px;font-size:12px;line-height:12px;font-weight:400;color:#6d6d6d;letter-spacing:-0.500px;transform:scaleX(0.9927);transform-origin:left center;">1.43 MB</div><svg class="b" style="left:964px;top:580px;" width="42" height="45" viewBox="0 0 42 45"><path d="M6.5 0.5 H28.5 L39.5 11.5 V43.5 H6.5 Z" fill="#f7f7f7" stroke="#6f6f6f" stroke-width="1"/><path d="M28.5 0.5 V11.5 H39.5" fill="none" stroke="#6f6f6f" stroke-width="1"/><rect x="1" y="11" width="22" height="21.6" rx="0.8" fill="#187a44"/><path d="M7 16.5 L17 27.8 M17 16.5 L7 27.8" stroke="#fff" stroke-width="3.2"/><path d="M25 17.7 H29.6 M31 17.7 H35.6" stroke="#2bbd6e" stroke-width="1.7"/><path d="M25 21.8 H29.6 M31 21.8 H35.6" stroke="#188a4c" stroke-width="1.7"/><path d="M25 25.8 H29.6 M31 25.8 H35.6" stroke="#0e5c32" stroke-width="1.7"/></svg><div class="t" style="left:1016px;top:579.14px;font-size:12px;line-height:12px;font-weight:400;color:#000;letter-spacing:-0.099px;">Hàng tồn kho ban đầu _ Kho Kho</div><div class="t" style="left:1016px;top:594.64px;font-size:12px;line-height:12px;font-weight:400;color:#000;letter-spacing:-0.250px;">chính2023-30-14.xlsx</div><div class="t" style="left:1016px;top:610.04px;font-size:12px;line-height:12px;font-weight:400;color:#6d6d6d;letter-spacing:-0.076px;">Microsoft Excel Worksheet</div><svg class="b" style="left:710px;top:636px;" width="42" height="45" viewBox="0 0 42 45"><path d="M6.5 0.5 H28.5 L39.5 11.5 V43.5 H6.5 Z" fill="#f7f7f7" stroke="#6f6f6f" stroke-width="1"/><path d="M28.5 0.5 V11.5 H39.5" fill="none" stroke="#6f6f6f" stroke-width="1"/><rect x="1" y="11" width="22" height="21.6" rx="0.8" fill="#187a44"/><path d="M7 16.5 L17 27.8 M17 16.5 L7 27.8" stroke="#fff" stroke-width="3.2"/><path d="M25 17.7 H29.6 M31 17.7 H35.6" stroke="#2bbd6e" stroke-width="1.7"/><path d="M25 21.8 H29.6 M31 21.8 H35.6" stroke="#188a4c" stroke-width="1.7"/><path d="M25 25.8 H29.6 M31 25.8 H35.6" stroke="#0e5c32" stroke-width="1.7"/></svg><div class="t" style="left:762.3px;top:635.44px;font-size:12px;line-height:12px;font-weight:400;color:#000;letter-spacing:-0.229px;">TimLinkSource.xlsx</div><div class="t" style="left:762.3px;top:651.44px;font-size:12px;line-height:12px;font-weight:400;color:#6d6d6d;letter-spacing:-0.076px;">Microsoft Excel Worksheet</div><div class="t" style="left:762.3px;top:667.24px;font-size:12px;line-height:12px;font-weight:400;color:#6d6d6d;letter-spacing:-0.500px;transform:scaleX(0.9319);transform-origin:left center;">21.9 KB</div><svg class="b" style="left:964px;top:636px;" width="42" height="45" viewBox="0 0 42 45"><path d="M6.5 0.5 H28.5 L39.5 11.5 V43.5 H6.5 Z" fill="#f7f7f7" stroke="#6f6f6f" stroke-width="1"/><path d="M28.5 0.5 V11.5 H39.5" fill="none" stroke="#6f6f6f" stroke-width="1"/><rect x="1" y="11" width="22" height="21.6" rx="0.8" fill="#187a44"/><path d="M7 16.5 L17 27.8 M17 16.5 L7 27.8" stroke="#fff" stroke-width="3.2"/><path d="M25 17.7 H29.6 M31 17.7 H35.6" stroke="#2bbd6e" stroke-width="1.7"/><path d="M25 21.8 H29.6 M31 21.8 H35.6" stroke="#188a4c" stroke-width="1.7"/><path d="M25 25.8 H29.6 M31 25.8 H35.6" stroke="#0e5c32" stroke-width="1.7"/></svg><div class="t" style="left:1016px;top:635.44px;font-size:12px;line-height:12px;font-weight:400;color:#000;letter-spacing:-0.209px;">TimLinkSource (2).xlsx</div><div class="t" style="left:1016px;top:651.44px;font-size:12px;line-height:12px;font-weight:400;color:#6d6d6d;letter-spacing:-0.076px;">Microsoft Excel Worksheet</div><div class="t" style="left:1016px;top:667.24px;font-size:12px;line-height:12px;font-weight:400;color:#6d6d6d;letter-spacing:-0.500px;transform:scaleX(0.9470);transform-origin:left center;">25.2 KB</div><svg class="b" style="left:951px;top:551px;" width="15" height="22" viewBox="0 0 15 22"><path d="M1.5 1.2 V17.8 L5.3 14.2 L8.3 20.6 L11 19.4 L8.3 13.3 L13.2 13.1 Z" fill="#fff" stroke="#111" stroke-width="1.1" stroke-linejoin="round"/></svg><div class="t" style="right:1271.5px;top:703.59px;font-size:12px;line-height:12px;font-weight:400;color:#000;letter-spacing:-0.281px;">File name:</div><div class="t" style="right:1271.5px;top:728.59px;font-size:12px;line-height:12px;font-weight:400;color:#000;letter-spacing:-0.497px;">Save as type:</div><div class="b" style="left:654px;top:698px;width:814px;height:23px;background:#fff;border:1px solid #0078d7"></div><div class="b" style="left:660px;top:702px;width:139px;height:14px;background:#0078d7"></div><div class="t" style="left:660px;top:703.59px;font-size:12px;line-height:12px;font-weight:400;color:#fff;letter-spacing:-0.251px;">DanhSachKhachHang.xlsx</div><svg class="b" style="left:1453px;top:707px;" width="12" height="6" viewBox="0 0 12 6"><path d="M0.6 0.6 L5.8 5.2 L11 0.6" stroke="#333" stroke-width="1.1" fill="none"/></svg><div class="b" style="left:654px;top:723px;width:814px;height:23px;background:#e1e1e1;border:1px solid #adadad"></div><div class="t" style="left:658.5px;top:728.59px;font-size:12px;line-height:12px;font-weight:400;color:#000;letter-spacing:-0.103px;">Microsoft Excel (*.xlsx)</div><svg class="b" style="left:1453px;top:732px;" width="12" height="6" viewBox="0 0 12 6"><path d="M0.6 0.6 L5.8 5.2 L11 0.6" stroke="#333" stroke-width="1.1" fill="none"/></svg><svg class="b" style="left:542px;top:778px;" width="10" height="6" viewBox="0 0 10 6"><path d="M1 5 L5 1 L9 5" stroke="#333" stroke-width="1.6" fill="none"/></svg><div class="t" style="left:559.6px;top:776.09px;font-size:12px;line-height:12px;font-weight:400;color:#000;letter-spacing:-0.239px;">Hide Folders</div><div class="b" style="left:1269px;top:767px;width:86px;height:24px;background:#e1e1e1;border:2px solid #0078d7"></div><div class="t" style="left:1012px;width:600px;text-align:center;top:772.84px;font-size:12px;line-height:12px;font-weight:400;color:#000;letter-spacing:-0.500px;transform:scaleX(0.9378);transform-origin:center center;">Save</div><div class="b" style="left:1369px;top:767px;width:86px;height:24px;background:#e1e1e1;border:1px solid #adadad"></div><div class="t" style="left:1111.9px;width:600px;text-align:center;top:772.84px;font-size:12px;line-height:12px;font-weight:400;color:#000;letter-spacing:-0.422px;">Cancel</div><svg class="b" style="left:1462px;top:795px;" width="9" height="9" viewBox="0 0 9 9"><rect x="6" y="0" width="2" height="2" fill="#aaa"/><rect x="3" y="3" width="2" height="2" fill="#aaa"/><rect x="6" y="3" width="2" height="2" fill="#aaa"/><rect x="0" y="6" width="2" height="2" fill="#aaa"/><rect x="3" y="6" width="2" height="2" fill="#aaa"/><rect x="6" y="6" width="2" height="2" fill="#aaa"/></svg>
</body></html>
